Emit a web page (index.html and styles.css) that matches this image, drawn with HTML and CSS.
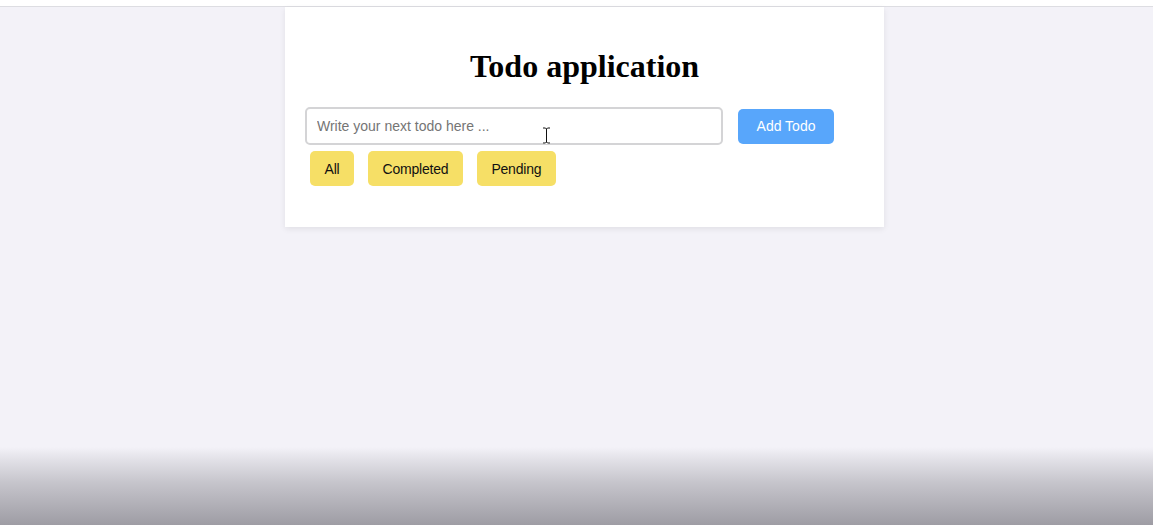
FILE: index.html
```html
<!DOCTYPE html>
<html>
<head>
<meta charset="utf-8">
<title>Todo application</title>
<link rel="stylesheet" href="styles.css">
</head>
<body>
<div class="topbar"></div>
<main class="page">
  <section class="card">
    <h1 class="title">Todo application</h1>
    <div class="add-row">
      <input class="todo-input" type="text" placeholder="Write your next todo here ...">
      <button class="btn btn-add">Add Todo</button>
    </div>
    <div class="filters">
      <button class="btn btn-filter">All</button>
      <button class="btn btn-filter">Completed</button>
      <button class="btn btn-filter">Pending</button>
    </div>
  </section>
</main>
<svg class="cursor" width="9" height="17" viewBox="0 0 9 17"><path d="M1 1h2.5l1 1 1-1H8M4.5 2v13M1 16h2.5l1-1 1 1H8" fill="none" stroke="#fff" stroke-width="2.4"/><path d="M1 1h2.5l1 1 1-1H8M4.5 2v13M1 16h2.5l1-1 1 1H8" fill="none" stroke="#111" stroke-width="1"/></svg>
<div class="fade"></div>
</body>
</html>
```
FILE: styles.css
```css
html, body {
  margin: 0;
  height: 100%;
}
body {
  background: #f3f2f8;
  font-family: "Liberation Sans", Arial, sans-serif;
  overflow: hidden;
  position: relative;
}
.topbar {
  height: 6px;
  background: #ffffff;
  border-bottom: 1px solid #dddde2;
}
.page {
  display: flex;
  justify-content: center;
  padding-left: 16px;
}
.card {
  width: 599px;
  box-sizing: border-box;
  background: #ffffff;
  padding: 39px 20px 41px;
  box-shadow: 0 2px 6px rgba(0, 0, 0, 0.08);
}
.title {
  margin: 0 0 21px;
  font-family: "Liberation Serif", "Times New Roman", serif;
  font-weight: bold;
  font-size: 32px;
  line-height: 40px;
  text-align: center;
  color: #000;
}
.add-row {
  display: flex;
  align-items: center;
  gap: 15px;
}
.todo-input {
  width: 418px;
  height: 38px;
  box-sizing: border-box;
  border: 2px solid #d4d4d6;
  border-radius: 5px;
  padding: 0 10px;
  font-family: "Liberation Sans", Arial, sans-serif;
  font-size: 14px;
  outline: none;
}
.todo-input::placeholder {
  color: #757575;
}
.btn {
  border: none;
  border-radius: 5px;
  height: 35px;
  font-family: "Liberation Sans", Arial, sans-serif;
  font-size: 14px;
  cursor: pointer;
}
.btn-add {
  width: 96px;
  background: #58a6fb;
  color: #ffffff;
}
.filters {
  display: flex;
  gap: 14px;
  margin: 6px 0 0 5px;
}
.btn-filter {
  background: #f6df66;
  color: #111;
  padding: 0 14.5px;
  letter-spacing: -0.2px;
}
.cursor {
  position: absolute;
  left: 542px;
  top: 127px;
}
.fade {
  position: absolute;
  left: 0;
  right: 0;
  bottom: 0;
  height: 78px;
  background: linear-gradient(to bottom, rgba(40, 38, 48, 0) 0%, rgba(40, 38, 48, 0.08) 15%, rgba(40, 38, 48, 0.22) 45%, rgba(40, 38, 48, 0.42) 100%);
  pointer-events: none;
}
```
